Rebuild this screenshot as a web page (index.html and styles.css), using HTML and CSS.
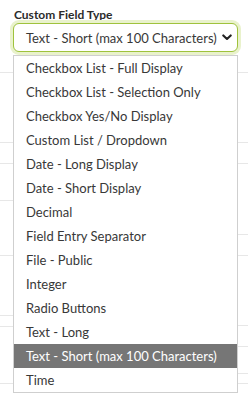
FILE: index.html
```html
<!DOCTYPE html>
<html>
<head>
<meta charset="utf-8">
<link rel="stylesheet" href="styles.css">
</head>
<body>
<div class="page">
  <div class="side side-left">
    <div class="row" style="height:72px"></div>
    <div class="row" style="height:69px"></div>
    <div class="row" style="height:20px"></div>
    <div class="row" style="height:36px"></div>
    <div class="row" style="height:54px"></div>
    <div class="row" style="height:59px"></div>
    <div class="row" style="height:10px"></div>
    <div class="row" style="height:56px"></div>
  </div>
  <div class="center">
    <div class="label">Custom Field Type</div>
    <div class="field">
      <div class="select">
        <span class="value">Text - Short (max 100 Characters)</span>
        <svg class="chev" width="10" height="7" viewBox="0 0 10 7"><path d="M1.3 1.4 L5 5 L8.7 1.4" fill="none" stroke="#222" stroke-width="2.1" stroke-linecap="round" stroke-linejoin="round"/></svg>
      </div>
      <ul class="menu">
        <li>Checkbox List - Full Display</li>
        <li>Checkbox List - Selection Only</li>
        <li>Checkbox Yes/No Display</li>
        <li>Custom List / Dropdown</li>
        <li>Date - Long Display</li>
        <li>Date - Short Display</li>
        <li>Decimal</li>
        <li>Field Entry Separator</li>
        <li>File - Public</li>
        <li>Integer</li>
        <li>Radio Buttons</li>
        <li>Text - Long</li>
        <li class="active">Text - Short (max 100 Characters)</li>
        <li>Time</li>
      </ul>
    </div>
  </div>
  <div class="side side-right">
    <div class="row" style="height:72px"></div>
    <div class="row" style="height:69px"></div>
    <div class="row" style="height:20px"></div>
    <div class="row" style="height:70px"></div>
    <div class="row" style="height:20px"></div>
    <div class="row" style="height:69px"></div>
    <div class="row" style="height:20px"></div>
    <div class="row" style="height:26px"></div>
    <div class="row" style="height:9px"></div>
  </div>
</div>
</body>
</html>
```

FILE: styles.css
```css
html, body {
  margin: 0;
  padding: 0;
  background: #fff;
}
body {
  width: 248px;
  height: 402px;
  overflow: hidden;
  font-family: Lato, "Liberation Sans", sans-serif;
  color: #333;
}
.page {
  display: grid;
  grid-template-columns: 13px 225px 10px;
  height: 402px;
}
.side {
  display: flex;
  flex-direction: column;
}
.row {
  flex: none;
  border-bottom: 1px solid #e7e7e7;
}
.center {
  padding-top: 7px;
}
.label {
  font-weight: 700;
  font-size: 12px;
  line-height: 15px;
  color: #2b2b2b;
  padding-left: 1px;
  margin-bottom: 1px;
}
.field {
  position: relative;
}
.select {
  height: 27px;
  border: 1px solid #9fc23c;
  border-radius: 6px;
  box-shadow: 0 0 0 3px #e9f2cc;
  display: flex;
  align-items: center;
  justify-content: space-between;
  padding: 0 5px 0 12px;
  font-size: 13px;
  color: #383838;
  background: #fff;
}
.chev {
  display: block;
}
.menu {
  position: absolute;
  left: 0;
  top: 32px;
  width: 223px;
  margin: 0;
  padding: 0;
  list-style: none;
  border: 1px solid #cfcfcf;
  background: #fff;
}
.menu li {
  height: 24px;
  line-height: 24px;
  padding-left: 12px;
  font-size: 13px;
  color: #383838;
  white-space: nowrap;
}
.menu li.active {
  background: #767676;
  color: #fff;
}
```
